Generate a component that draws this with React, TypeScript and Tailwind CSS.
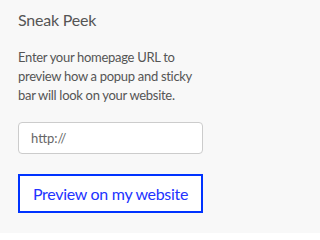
export default function App() {
  return (
    <div className="min-h-[233px] w-full bg-[#f8f8f8] px-[18px] pt-[9px] font-['Lato',sans-serif] text-[#555]">
      <h2 className="text-[16px] leading-[22px] tracking-[-0.2px]">Sneak Peek</h2>
      <p className="mt-[17px] w-[185px] text-[13px] leading-[19px] tracking-[-0.3px]">
        Enter your homepage URL to preview how a popup and sticky bar will look on your website.
      </p>
      <input
        className="mt-[17px] block h-[32px] w-[185px] rounded-[4px] border border-[#ccc] bg-white px-[12px] text-[13px] text-[#555] outline-none placeholder:text-[#666]"
        placeholder="http://"
      />
      <button className="mt-[20px] block h-[39px] w-[185px] border-2 border-[#0033ff] bg-white text-[16px] tracking-[-0.3px] text-[#2233ff]">
        Preview on my website
      </button>
    </div>
  );
}
